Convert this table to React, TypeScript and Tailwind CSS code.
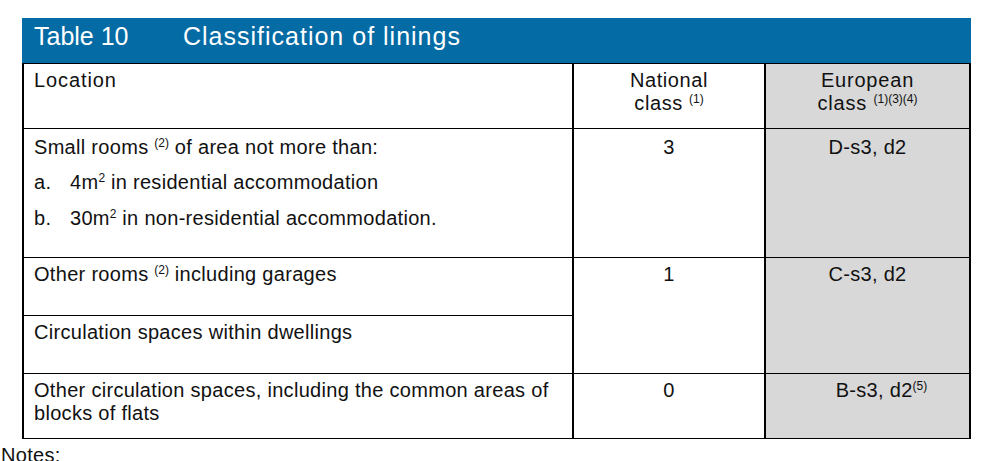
import React from "react";

const cell = "border-x-2 border-y border-black align-top pt-[5px] px-[12px]";
const first = "border-x-2 border-y border-black align-top pt-[5px] pl-[10px] pr-[12px]";
const grey = "bg-[#d8d8d8]";
const supCls = "text-[12px] top-[-0.55em] tracking-normal";

export default function App() {
  return (
    <div className="min-h-[461px] bg-white text-[#111] font-['Liberation_Sans',Arial,Helvetica,sans-serif] overflow-hidden">
      <div className="pt-[18px] pl-[22px]">
        <div className="w-[949px]">
          <div className="h-[45px] bg-[#046ba4] pl-[12px] pt-[3px] flex text-white text-[25px] leading-[30px]">
            <span className="w-[149px]">Table 10</span>
            <span className="tracking-[1px]">Classification of linings</span>
          </div>
          <table className="w-[949px] table-fixed border-collapse text-[20px] leading-[23px] tracking-[0.3px]">
            <colgroup>
              <col className="w-[550px]" />
              <col className="w-[192px]" />
              <col />
            </colgroup>
            <tbody>
              <tr className="h-[65px]">
                <td className={`${first} tracking-[0.9px]`}>Location</td>
                <td className={`${cell} text-center tracking-[0.6px]`}>
                  National
                  <br />
                  class <sup className={supCls}>(1)</sup>
                </td>
                <td className={`${cell} ${grey} text-center tracking-[0.8px]`}>
                  European
                  <br />
                  class <sup className={supCls}>(1)(3)(4)</sup>
                </td>
              </tr>
              <tr className="h-[129px]">
                <td className={`${first} !pt-[7px]`}>
                  <p>
                    Small rooms <sup className={supCls}>(2)</sup> of area not more than:
                  </p>
                  <p className="mt-[12px] flex">
                    <span className="w-[36px] shrink-0">a.</span>
                    <span>
                      4m<sup className={supCls}>2</sup> in residential accommodation
                    </span>
                  </p>
                  <p className="mt-[13px] flex">
                    <span className="w-[36px] shrink-0">b.</span>
                    <span>
                      30m<sup className={supCls}>2</sup> in non-residential accommodation.
                    </span>
                  </p>
                </td>
                <td className={`${cell} text-center !pt-[7px]`}>3</td>
                <td className={`${cell} ${grey} text-center !pt-[7px]`}>D-s3, d2</td>
              </tr>
              <tr className="h-[58px]">
                <td className={first}>
                  Other rooms <sup className={supCls}>(2)</sup> including garages
                </td>
                <td rowSpan={2} className={`${cell} text-center`}>
                  1
                </td>
                <td rowSpan={2} className={`${cell} ${grey} text-center`}>
                  C-s3, d2
                </td>
              </tr>
              <tr className="h-[58px]">
                <td className={first}>Circulation spaces within dwellings</td>
              </tr>
              <tr className="h-[65px]">
                <td className={first}>
                  Other circulation spaces, including the common areas of blocks of flats
                </td>
                <td className={`${cell} text-center`}>0</td>
                <td className={`${cell} ${grey} text-center !pl-[40px]`}>
                  B-s3, d2<sup className={supCls}>(5)</sup>
                </td>
              </tr>
            </tbody>
          </table>
        </div>
      </div>
      <div className="pl-[1px] mt-[5px] text-[20px] leading-[23px] tracking-[0.3px]">Notes:</div>
    </div>
  );
}
